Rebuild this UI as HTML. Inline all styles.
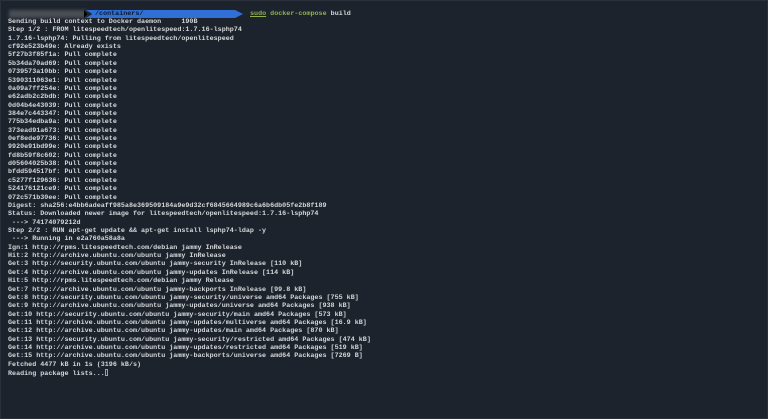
<!DOCTYPE html>
<html><head><style>
html,body{margin:0;padding:0;}
body{width:768px;height:419px;background:#1c232c;overflow:hidden;position:relative;font-family:"Liberation Mono",monospace;}
.frame{position:absolute;left:0;top:0;width:766px;height:417px;border:1px solid #2a313a;}
pre{position:absolute;left:8px;top:18px;margin:0;font-family:"Liberation Mono",monospace;font-size:6.72px;line-height:8.36px;color:#d6d8da;font-weight:bold;white-space:pre;}
.blur{position:absolute;left:9px;top:10px;width:77px;height:8px;background:#4a4e54;filter:blur(1.5px);}
.bar{position:absolute;left:86px;top:10px;width:157px;height:8px;background:#2f6fd6;clip-path:polygon(0 0,95% 0,100% 50%,95% 100%,0 100%,4% 50%);}
.bar0{position:absolute;left:84px;top:10px;width:6px;height:8px;background:#000;clip-path:polygon(0 0,60% 50%,0 100%);}
.path{position:absolute;left:95px;top:10px;font-size:6.72px;line-height:8px;color:#0b1a33;font-weight:bold;}
.cmd{position:absolute;left:250px;top:10px;font-size:6.72px;line-height:8px;font-weight:bold;color:#8fb04a;}
.cmd u{text-decoration:underline;}
.cmd b{color:#d6d8da;}
.cur{display:inline-block;width:3px;height:7px;border:1px solid #c8a030;vertical-align:-1px;box-sizing:border-box;}
</style></head><body>
<div class="frame"></div>
<div class="blur"></div>
<div class="bar"></div>
<div class="bar0"></div>
<div class="path">/containers/</div>
<div class="cmd"><u>sudo</u> docker-compose <b>build</b></div>
<pre>Sending build context to Docker daemon     190B
Step 1/2 : FROM litespeedtech/openlitespeed:1.7.16-lsphp74
1.7.16-lsphp74: Pulling from litespeedtech/openlitespeed
cf92e523b49e: Already exists
5f27b3f85f1a: Pull complete
5b34da70ad69: Pull complete
0739573a10bb: Pull complete
5390311063e1: Pull complete
0a09a7ff254e: Pull complete
e62adb2c2bdb: Pull complete
0d04b4e43039: Pull complete
384e7c443347: Pull complete
775b34edba9a: Pull complete
373ead91a673: Pull complete
0ef8ede97736: Pull complete
9920e91bd99e: Pull complete
fd8b59f8c602: Pull complete
d05604025b38: Pull complete
bfdd594517bf: Pull complete
c5277f129636: Pull complete
524176121ce9: Pull complete
072c571b30ee: Pull complete
Digest: sha256:e4bb6adeaff985a8e369509184a9e9d32cf6845664989c6a6b6db05fe2b8f189
Status: Downloaded newer image for litespeedtech/openlitespeed:1.7.16-lsphp74
 ---> 74174079212d
Step 2/2 : RUN apt-get update &amp;&amp; apt-get install lsphp74-ldap -y
 ---> Running in e2a760a58a8a
Ign:1 http://rpms.litespeedtech.com/debian jammy InRelease
Hit:2 http://archive.ubuntu.com/ubuntu jammy InRelease
Get:3 http://security.ubuntu.com/ubuntu jammy-security InRelease [110 kB]
Get:4 http://archive.ubuntu.com/ubuntu jammy-updates InRelease [114 kB]
Hit:5 http://rpms.litespeedtech.com/debian jammy Release
Get:7 http://archive.ubuntu.com/ubuntu jammy-backports InRelease [99.8 kB]
Get:8 http://security.ubuntu.com/ubuntu jammy-security/universe amd64 Packages [755 kB]
Get:9 http://archive.ubuntu.com/ubuntu jammy-updates/universe amd64 Packages [938 kB]
Get:10 http://security.ubuntu.com/ubuntu jammy-security/main amd64 Packages [573 kB]
Get:11 http://archive.ubuntu.com/ubuntu jammy-updates/multiverse amd64 Packages [16.9 kB]
Get:12 http://archive.ubuntu.com/ubuntu jammy-updates/main amd64 Packages [870 kB]
Get:13 http://security.ubuntu.com/ubuntu jammy-security/restricted amd64 Packages [474 kB]
Get:14 http://archive.ubuntu.com/ubuntu jammy-updates/restricted amd64 Packages [519 kB]
Get:15 http://archive.ubuntu.com/ubuntu jammy-backports/universe amd64 Packages [7269 B]
Fetched 4477 kB in 1s (3196 kB/s)
Reading package lists...<span class="cur"></span></pre>
</body></html>
